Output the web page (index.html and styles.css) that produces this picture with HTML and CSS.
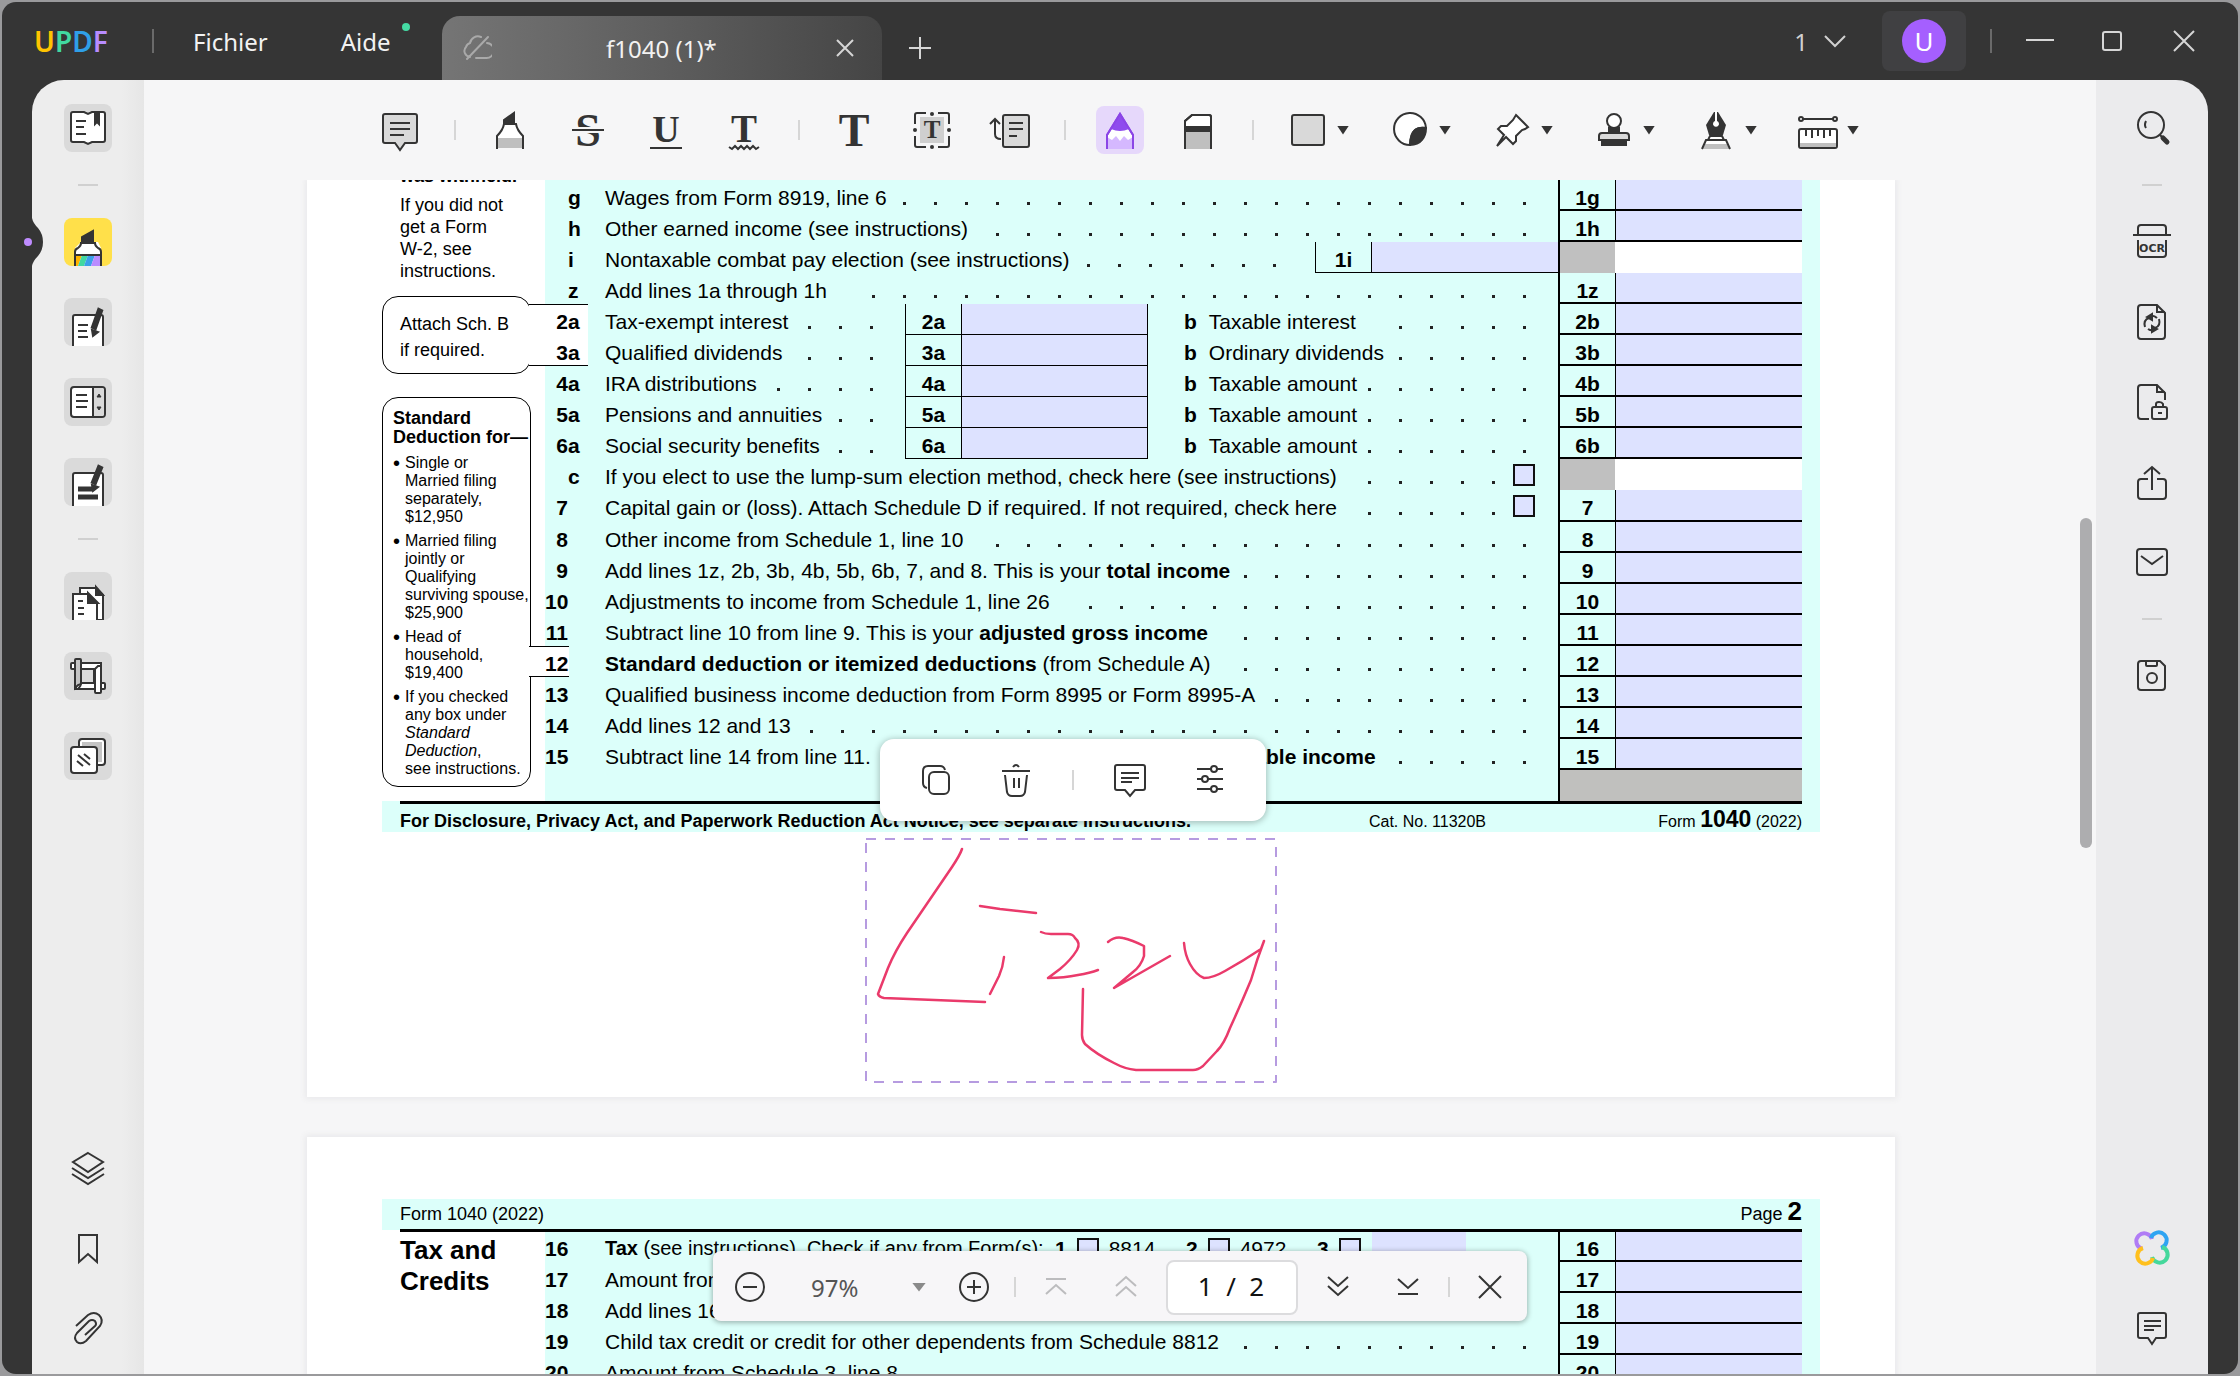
FILE: index.html
```html
<!DOCTYPE html>
<html lang="fr">
<head>
<meta charset="utf-8">
<title>UPDF - f1040 (1)</title>
<meta name="viewport" content="width=device-width, initial-scale=1">
<link rel="stylesheet" href="styles.css">
</head>
<body>
<div class="window">
  <header class="titlebar">
    <div class="logo"><span class="c-yellow">U</span><span class="c-green">P</span><span class="c-blue">D</span><span class="c-purple">F</span></div>
    <span class="bar-sep"></span>
    <nav class="menus">
      <button class="menu">Fichier</button>
      <button class="menu">Aide<span class="dot"></span></button>
    </nav>
    <div class="tab">
      <svg class="tab-cloud" width="30" height="28" viewBox="0 0 30 28" fill="none" stroke="#a9a9a9" stroke-width="2" stroke-linecap="round"><path d="M8 23a6 6 0 0 1-4-10 6 6 0 0 1 4-4 8 8 0 0 1 11-6M25 9a7 7 0 0 1-1 15H14M26 3 5 25"/></svg>
      <span class="tab-title">f1040 (1)*</span>
      <button class="plain" aria-label="Fermer l'onglet"><svg width="18" height="18" viewBox="0 0 18 18" stroke="#d6d6d6" stroke-width="2"><path d="M1 1l16 16M17 1 1 17"/></svg></button>
    </div>
    <button class="plain new-tab" aria-label="Nouvel onglet"><svg width="24" height="24" viewBox="0 0 24 24" stroke="#d6d6d6" stroke-width="2"><path d="M12 1v22M1 12h22"/></svg></button>
    <div class="window-tools">
      <button class="count">1<svg width="22" height="14" viewBox="0 0 22 14" fill="none" stroke="#d0d0d0" stroke-width="2"><path d="M1 2l10 10L21 2"/></svg></button>
      <button class="account" aria-label="Compte"><span class="avatar">U</span></button>
      <span class="bar-sep"></span>
      <button class="plain win" aria-label="Réduire"><svg width="28" height="22" viewBox="0 0 28 22" stroke="#d6d6d6" stroke-width="2"><path d="M0 10h28"/></svg></button>
      <button class="plain win" aria-label="Agrandir"><svg width="22" height="22" viewBox="0 0 22 22" fill="none" stroke="#d6d6d6" stroke-width="2"><rect x="2" y="2" width="18" height="18" rx="2"/></svg></button>
      <button class="plain win" aria-label="Fermer"><svg width="22" height="22" viewBox="0 0 22 22" stroke="#d6d6d6" stroke-width="2"><path d="M1 1l20 20M21 1 1 21"/></svg></button>
    </div>
  </header>

  <div class="shell">
    <nav class="rail rail-left">
      <button class="tile" aria-label="Lecteur"><svg viewBox="0 0 48 48"><path d="M9 8h11l4 2 4-2h11a2 2 0 0 1 2 2v26a2 2 0 0 1-2 2H28l-4 2-4-2H9a2 2 0 0 1-2-2V10a2 2 0 0 1 2-2z" fill="#fff"/><path d="M12 17h10M12 23h8M12 30h10"/><path d="M31 9h4v11l-2-2-2 2z" fill="#343434"/></svg></button>
      <span class="rule"></span>
      <button class="tile active" aria-label="Commenter"><svg viewBox="0 0 48 48"><path d="M17 24h17l3 6v18H11V30z" fill="#fff" stroke="none"/><path d="M11 37h7l-4 11h-3z" fill="#ffb400" stroke="none"/><path d="M18 37h6l-4 11h-6z" fill="#41d8a0" stroke="none"/><path d="M24 37h7l-4 11h-7z" fill="#3aa0e8" stroke="none"/><path d="M31 37h6v11H27z" fill="#b98cff" stroke="none"/><path d="M18 24v-5l11-6v11z" fill="#343434"/><path d="M11 48V34q0-3 3-4 3-2 3-5h14q0 3 3 5 3 1 3 4v14M11 37h26"/></svg></button>
      <button class="tile" aria-label="Modifier"><svg viewBox="0 0 48 48"><path d="M9 48V19a2 2 0 0 1 2-2h26a2 2 0 0 1 2 2v29" fill="#fff"/><path d="M14 27h10M14 33h9M14 39h10"/><path d="M35 12l2 1-6 17-2-1z" fill="#343434" stroke-width="4"/><path d="M28 32l6 2-5 4z" fill="#343434"/></svg></button>
      <button class="tile" aria-label="Formulaire"><svg viewBox="0 0 48 48"><rect x="7" y="9" width="34" height="30" rx="3" fill="#fff"/><path d="M30 10h8q2 0 2 2v24q0 2-2 2h-8z" fill="#d9d9d9" stroke="none"/><path d="M29 9v30M12 17h11M12 23h12M12 29h11"/><path d="M33 19l2-3 2 3zM33 29l2 3 2-3z" fill="#343434" stroke-width="1"/></svg></button>
      <button class="tile" aria-label="Caviarder"><svg viewBox="0 0 48 48"><path d="M9 48V17a2 2 0 0 1 2-2h26a2 2 0 0 1 2 2v31" fill="#fff"/><path d="M14 31h14M14 39h20" stroke-width="5"/><path d="M35 9l2 1-6 15-2-1z" fill="#343434" stroke-width="4"/><path d="M28 27l6 2-5 4z" fill="#343434"/></svg></button>
      <span class="rule"></span>
      <button class="tile" aria-label="Organiser"><svg viewBox="0 0 48 48"><path d="M16 44V16h16l7 7v25H16" fill="#fff"/><path d="M32 15v8h7z" fill="#343434"/><path d="M9 48V22h15l9 9v17" fill="#fff"/><path d="M24 21v10h10z" fill="#343434"/><path d="M14 29h5M14 36h6M14 42h6"/></svg></button>
      <button class="tile" aria-label="Recadrer"><svg viewBox="0 0 48 48"><path d="M8 11h29v6H8q-1 0-1-1v-4q0-1 1-1z" fill="#fff"/><path d="M12 31h28q1 0 1 1v4q0 1-1 1H12z" fill="#fff"/><path d="M12 7h4q1 0 1 1v24l-3 1-3 3V8q0-1 1-1z" fill="#c4c4c4"/><path d="M31 17l3-3h3v26q0 1-1 1h-4q-1 0-1-1z" fill="#fff"/><path d="M11 33v4h3l3-4M30 18v13H17"/></svg></button>
      <button class="tile" aria-label="Filigrane"><svg viewBox="0 0 48 48"><rect x="15" y="7" width="26" height="26" rx="3" fill="#fff"/><path d="M18 10h20v20H18z" fill="#c4c4c4" stroke="none"/><rect x="7" y="15" width="26" height="26" rx="3" fill="#fff"/><path d="M13 29l6 5M14 23l12 10M20 22l6 5"/></svg></button>
      <span class="spacer"></span>
      <button class="tile bare" aria-label="Calques"><svg viewBox="0 0 48 48"><path d="M24 9l15 9-15 10L9 18zM8 24l16 10 16-10M8 30l16 10 16-10"/></svg></button>
      <button class="tile bare" aria-label="Signets"><svg viewBox="0 0 48 48"><path d="M15 11h18v27l-9-8-9 8z"/></svg></button>
      <button class="tile bare" aria-label="Pièces jointes"><svg viewBox="0 0 48 48"><path d="M12 22 24 11q6-4 11 0 5 5 1 11L22 37q-5 4-9 1-4-4 0-9l12-12q3-2 6 0 2 3 0 5L21 31"/></svg></button>
      <svg class="notch" width="12" height="48" viewBox="0 0 12 48"><path d="M0 0q1 5 6 10 5 6 5 14t-5 14q-5 5-6 10z" fill="#353535"/></svg>
      <span class="notch-dot"></span>
    </nav>

    <main class="workspace">
      <div class="toolbar">
        <button class="tool" aria-label="Note"><svg viewBox="0 0 40 40"><path d="M5 4h30a2 2 0 0 1 2 2v25a2 2 0 0 1-2 2H25l-5 7-5-7H5a2 2 0 0 1-2-2V6a2 2 0 0 1 2-2z" fill="#d9d9d9"/><path d="M10 13h20M10 19h20M10 25h14"/></svg></button>
        <span class="sep"></span>
        <button class="tool" aria-label="Surligner"><svg viewBox="0 0 40 40"><path d="M14 14h13l6 12v12H7V26z" fill="#fff" stroke="none"/><path d="M7 28h26v10H7z" fill="#bfbfbf" stroke="none"/><path d="M14 14V10l10-7v11z" fill="#343434"/><path d="M7 39V26q6-6 7-12h12q1 6 7 12v13"/></svg></button>
        <button class="tool" aria-label="Barrer"><svg viewBox="0 0 40 40"><text class="serif" x="20" y="36" font-size="46">S</text><path d="M4 20h32" class="knock"/><path d="M4 20h32"/></svg></button>
        <button class="tool" aria-label="Souligner"><svg viewBox="0 0 40 40"><text class="serif" x="20" y="32" font-size="38">U</text><path d="M4 38h32"/></svg></button>
        <button class="tool" aria-label="Ondulé"><svg viewBox="0 0 40 40"><text class="serif" x="20" y="32" font-size="39">T</text><path d="M5 37l3 2 3-3 3 3 3-3 3 3 3-3 3 3 3-3 3 3 3-2"/></svg></button>
        <span class="sep"></span>
        <button class="tool" aria-label="Texte"><svg viewBox="0 0 40 40"><text class="serif" x="20" y="36" font-size="46">T</text></svg></button>
        <button class="tool" aria-label="Zone de texte"><svg viewBox="0 0 40 40"><path d="M8 7h24v26H8z" fill="#cfcfcf" stroke="none"/><text class="serif" x="20" y="28" font-size="25">T</text><path d="M14 3H5q-2 0-2 2v9M26 3h9q2 0 2 2v9M14 37H5q-2 0-2-2v-9M26 37h9q2 0 2-2v-9"/><g fill="#343434" stroke="none"><circle cx="20" cy="4" r="2"/><circle cx="20" cy="37" r="2"/><circle cx="3" cy="20" r="2"/><circle cx="37" cy="20" r="2"/></g></svg></button>
        <button class="tool" aria-label="Légende"><svg viewBox="0 0 40 40"><rect x="13" y="5" width="26" height="32" rx="2" fill="#d9d9d9"/><path d="M19 13h14M19 19h14M19 26h8"/><path d="M0 14l5-5 5 5M5 9v15q0 5 6 5"/></svg></button>
        <span class="sep"></span>
        <button class="tool active" aria-label="Crayon"><svg viewBox="0 0 40 40"><path d="M7 39V25L20 4l13 21v14" fill="#fff"/><path d="M7 39V27l5 3 4-4 4 5 4-5 4 4 5-3v12z" fill="#d5b8ff" stroke="none"/><path d="M20 3l9 16q-9 4-18 0z" fill="#8f4bee" stroke="none"/><path d="M7 39V25L20 4l13 21v14"/></svg></button>
        <button class="tool" aria-label="Gomme"><svg viewBox="0 0 40 40"><path d="M7 39V11l7-6h17q2 0 2 2v32" fill="#fff"/><path d="M8 22h24v17H8z" fill="#bfbfbf" stroke="none"/><path d="M7 16h26v6H7z" fill="#343434" stroke="none"/><path d="M7 39V11l7-6h17q2 0 2 2v32"/></svg></button>
        <span class="sep"></span>
        <button class="tool drop" aria-label="Formes"><svg viewBox="0 0 40 40"><rect x="4" y="5" width="32" height="30" rx="2" fill="#d9d9d9"/></svg><span class="caret"></span></button>
        <button class="tool drop" aria-label="Autocollants"><svg viewBox="0 0 40 40"><path d="M36 18A16 16 0 1 0 20 35q1-12 5-15 4-3 11-2z" fill="#fff"/><path d="M36 18q-8-1-11 2-5 4-5 15 8 0 12-5 4-5 4-12z" fill="#343434"/></svg><span class="caret"></span></button>
        <button class="tool drop" aria-label="Épingle"><svg viewBox="0 0 40 40"><path d="M24 5l12 12-3 2-3 1-6 6 0 5-3 3-7-7-9 9 7-11-6-6 3-3h6l6-6z" fill="#fff"/></svg><span class="caret"></span></button>
        <button class="tool drop" aria-label="Tampon"><svg viewBox="0 0 40 40"><circle cx="20" cy="11" r="7" fill="#fff"/><path d="M15 18h10v5H15z" fill="#343434"/><path d="M8 23h24q3 0 3 3v4H5v-4q0-3 3-3z" fill="#d9d9d9"/><path d="M8 31h24v4H8z" fill="#343434"/></svg><span class="caret"></span></button>
        <button class="tool drop" aria-label="Signature"><svg viewBox="0 0 40 40"><path d="M18 2h4l8 13-3 10H13l-3-10z" fill="#343434" stroke="none"/><path d="M19 1h2v10a3 3 0 1 1-2 0z" fill="#fff" stroke="none"/><path d="M14 26h12l2 4H12z" fill="#fff"/><path d="M10 30h20l4 9H6z" fill="#fff" stroke="none"/><path d="M9 34h22l2 5H7z" fill="#bfbfbf" stroke="none"/><path d="M6 39l4-9h20l4 9"/></svg><span class="caret"></span></button>
        <button class="tool drop" aria-label="Mesure"><svg viewBox="0 0 40 40"><path d="M4 9h32"/><circle cx="3" cy="9" r="2" fill="#fff"/><circle cx="37" cy="9" r="2" fill="#fff"/><rect x="1" y="19" width="38" height="19" rx="2" fill="#fff"/><path d="M2 33h36v4H2z" fill="#bfbfbf" stroke="none"/><path d="M8 20v6M14 20v8M20 20v6M26 20v8M32 20v6"/></svg><span class="caret"></span></button>
      </div>

      <div class="pages">
        <section class="page page-one">
          <div class="form">
            <aside class="notes">
              <p class="note"><b>was withheld.</b></p>
              <p class="note">If you did not<br>get a Form<br>W-2, see<br>instructions.</p>
              <div class="callout attach">Attach Sch. B<br>if required.</div>
              <div class="callout standard">
                <h3>Standard<br>Deduction for—</h3>
                <ul>
                  <li><span>Single or<br>Married filing<br>separately,<br>$12,950</span></li>
                  <li><span>Married filing<br>jointly or<br>Qualifying<br>surviving spouse,<br>$25,900</span></li>
                  <li><span>Head of<br>household,<br>$19,400</span></li>
                  <li><span>If you checked<br>any box under<br><i>Standard<br>Deduction</i>,<br>see instructions.</span></li>
                </ul>
              </div>
            </aside>
            <div class="lines">
              <div class="line"><b class="num"><span></span>g</b><div class="body"><label for="f1g">Wages from Form 8919, line 6</label><span class="leader" style="--dots:21"></span></div><b class="box">1g</b><input class="amount" id="f1g"></div>
              <div class="line"><b class="num"><span></span>h</b><div class="body"><label for="f1h">Other earned income (see instructions)</label><span class="leader" style="--dots:18"></span></div><b class="box">1h</b><input class="amount" id="f1h"></div>
              <div class="line"><b class="num"><span></span>i</b><div class="body"><label for="f1i">Nontaxable combat pay election (see instructions)</label><span class="leader before-box" style="--dots:7"></span><b class="box mini">1i</b><input class="amount mini" id="f1i"></div><span class="box shaded"></span><span class="amount blank"></span></div>
              <div class="line"><b class="num"><span></span>z</b><div class="body"><label for="f1z">Add lines 1a through 1h</label><span class="leader" style="--dots:22"></span></div><b class="box">1z</b><input class="amount" id="f1z"></div>
              <div class="line"><b class="num tab-open"><span>2</span>a</b><div class="body"><div class="half"><label for="f2a">Tax-exempt interest</label><span class="leader" style="--dots:3"></span></div><b class="box mini">2a</b><input class="amount mini closed" id="f2a"><b class="sub">b</b><label for="f2b">Taxable interest</label><span class="leader" style="--dots:5"></span></div><b class="box">2b</b><input class="amount" id="f2b"></div>
              <div class="line"><b class="num tab-close"><span>3</span>a</b><div class="body"><div class="half"><label for="f3a">Qualified dividends</label><span class="leader" style="--dots:3"></span></div><b class="box mini">3a</b><input class="amount mini closed" id="f3a"><b class="sub">b</b><label for="f3b">Ordinary dividends</label><span class="leader" style="--dots:5"></span></div><b class="box">3b</b><input class="amount" id="f3b"></div>
              <div class="line"><b class="num"><span>4</span>a</b><div class="body"><div class="half"><label for="f4a">IRA distributions</label><span class="leader" style="--dots:4"></span></div><b class="box mini">4a</b><input class="amount mini closed" id="f4a"><b class="sub">b</b><label for="f4b">Taxable amount</label><span class="leader" style="--dots:6"></span></div><b class="box">4b</b><input class="amount" id="f4b"></div>
              <div class="line"><b class="num"><span>5</span>a</b><div class="body"><div class="half"><label for="f5a">Pensions and annuities</label><span class="leader" style="--dots:2"></span></div><b class="box mini">5a</b><input class="amount mini closed" id="f5a"><b class="sub">b</b><label for="f5b">Taxable amount</label><span class="leader" style="--dots:6"></span></div><b class="box">5b</b><input class="amount" id="f5b"></div>
              <div class="line"><b class="num"><span>6</span>a</b><div class="body"><div class="half"><label for="f6a">Social security benefits</label><span class="leader" style="--dots:2"></span></div><b class="box mini">6a</b><input class="amount mini closed" id="f6a"><b class="sub">b</b><label for="f6b">Taxable amount</label><span class="leader" style="--dots:6"></span></div><b class="box">6b</b><input class="amount" id="f6b"></div>
              <div class="line"><b class="num"><span></span>c</b><div class="body"><label for="f6c">If you elect to use the lump-sum election method, check here (see instructions)</label><span class="leader before-check" style="--dots:5"></span><input type="checkbox" class="check" id="f6c"></div><span class="box shaded"></span><span class="amount blank"></span></div>
              <div class="line"><b class="num"><span>7</span></b><div class="body"><label for="f7c">Capital gain or (loss). Attach Schedule D if required. If not required, check here</label><span class="leader before-check" style="--dots:5"></span><input type="checkbox" class="check" id="f7c"></div><b class="box">7</b><input class="amount" aria-label="7"></div>
              <div class="line"><b class="num"><span>8</span></b><div class="body"><label for="f8">Other income from Schedule 1, line 10</label><span class="leader" style="--dots:18"></span></div><b class="box">8</b><input class="amount" id="f8"></div>
              <div class="line"><b class="num"><span>9</span></b><div class="body"><label for="f9">Add lines 1z, 2b, 3b, 4b, 5b, 6b, 7, and 8. This is your <b>total income</b></label><span class="leader" style="--dots:10"></span></div><b class="box">9</b><input class="amount" id="f9"></div>
              <div class="line"><b class="num"><span>10</span></b><div class="body"><label for="f10">Adjustments to income from Schedule 1, line 26</label><span class="leader" style="--dots:15"></span></div><b class="box">10</b><input class="amount" id="f10"></div>
              <div class="line"><b class="num"><span>11</span></b><div class="body"><label for="f11">Subtract line 10 from line 9. This is your <b>adjusted gross income</b></label><span class="leader" style="--dots:10"></span></div><b class="box">11</b><input class="amount" id="f11"></div>
              <div class="line"><b class="num tab-single"><span>12</span></b><div class="body"><label for="f12"><b>Standard deduction or itemized deductions</b> (from Schedule A)</label><span class="leader" style="--dots:10"></span></div><b class="box">12</b><input class="amount" id="f12"></div>
              <div class="line"><b class="num"><span>13</span></b><div class="body"><label for="f13">Qualified business income deduction from Form 8995 or Form 8995-A</label><span class="leader" style="--dots:9"></span></div><b class="box">13</b><input class="amount" id="f13"></div>
              <div class="line"><b class="num"><span>14</span></b><div class="body"><label for="f14">Add lines 12 and 13</label><span class="leader" style="--dots:24"></span></div><b class="box">14</b><input class="amount" id="f14"></div>
              <div class="line"><b class="num"><span>15</span></b><div class="body"><label for="f15">Subtract line 14 from line 11. &nbsp;If zero or less, enter -0-. This is your <b>taxable income</b></label><span class="leader" style="--dots:5"></span></div><b class="box">15</b><input class="amount" id="f15"></div>
              <div class="line"><span class="shaded-end"></span></div>
            </div>
          </div>
          <footer class="form-foot">
            <div class="foot-row"><b class="notice">For Disclosure, Privacy Act, and Paperwork Reduction Act Notice, see separate instructions.</b><span class="cat">Cat. No. 11320B</span><span class="form-id">Form <b>1040</b> (2022)</span></div>
          </footer>

          <div class="ink">
            <svg width="413" height="246" viewBox="0 0 413 246" fill="none" stroke="#ea3a6b" stroke-width="2.5" stroke-linecap="round" stroke-linejoin="round">
              <rect x="1" y="1" width="410" height="243" stroke="#b69be0" stroke-width="2" stroke-dasharray="10 9" stroke-linecap="butt"/>
              <path d="M97 11q-2 6-10 18L42 95q-12 18-19 35l-10 26q1 3 6 4l101 4M139 119q-1 10-5 19l-9 18M115 68l20 3 36 4"/>
              <path d="M176 94q4 2 10 2h17q5 0 7 4 6 5 2 12-6 10-17 19l-12 9q16 0 30-3 12-2 20-5M243 104q7-6 15-4 9 2 21 8v10q-3 10-11 16l-19 16 56-32"/>
              <path d="M319 105q1 12 6 21 6 11 14 14 9 0 21-7 18-10 36-22l3-8q-7 18-13 39-10 24-21 48-6 16-13 23l-14 15q-5 4-10 4h-57q-11-1-22-7-18-9-29-19-3-4-3-9l1-46"/>
            </svg>
            <div class="float-bar">
              <button class="tool" aria-label="Copier"><svg viewBox="0 0 40 40"><path d="M11 28q-4-1-4-5V11q0-5 5-5h12q4 0 5 4"/><rect x="13" y="12" width="20" height="22" rx="5"/></svg></button>
              <button class="tool" aria-label="Supprimer"><svg viewBox="0 0 40 40"><path d="M6 11h28M17 7q3-4 6 0M9 15l2 17q1 4 5 4h8q4 0 5-4l2-17M18 18v10M23 18v10"/></svg></button>
              <span class="sep"></span>
              <button class="tool" aria-label="Note"><svg viewBox="0 0 40 40"><path d="M7 5h26q2 0 2 2v21q0 2-2 2h-8l-5 6-5-6H7q-2 0-2-2V7q0-2 2-2zM11 13h18M11 18h18M11 22h11"/></svg></button>
              <button class="tool" aria-label="Propriétés"><svg viewBox="0 0 40 40"><path d="M7 9h14M27 9h6M7 19h5M18 19h15M7 29h14M27 29h6"/><circle cx="24" cy="9" r="3"/><circle cx="15" cy="19" r="3"/><circle cx="24" cy="29" r="3"/></svg></button>
            </div>
          </div>
        </section>

        <section class="page page-two">
          <div class="form-head"><div class="head-row"><span>Form 1040 (2022)</span><span>Page <b>2</b></span></div></div>
          <div class="form">
            <h2 class="part">Tax and<br>Credits</h2>
            <div class="lines fixed">
              <div class="line"><b class="num"><span>16</span></b><div class="body"><div class="tax-text"><b>Tax</b> (see instructions). Check if any from Form(s):</div><label class="opt"><b>1</b><input type="checkbox" class="check">8814</label><label class="opt"><b>2</b><input type="checkbox" class="check">4972</label><label class="opt"><b>3</b><input type="checkbox" class="check"></label><input class="amount other" aria-label="Form"></div><b class="box">16</b><input class="amount" aria-label="16"></div>
              <div class="line"><b class="num"><span>17</span></b><div class="body"><label for="f17">Amount from Schedule 2, line 3</label></div><b class="box">17</b><input class="amount" id="f17"></div>
              <div class="line"><b class="num"><span>18</span></b><div class="body"><label for="f18">Add lines 16 and 17</label></div><b class="box">18</b><input class="amount" id="f18"></div>
              <div class="line"><b class="num"><span>19</span></b><div class="body"><label for="f19">Child tax credit or credit for other dependents from Schedule 8812</label><span class="leader" style="--dots:10"></span></div><b class="box">19</b><input class="amount" id="f19"></div>
              <div class="line"><b class="num"><span>20</span></b><div class="body"><label for="f20">Amount from Schedule 3, line 8</label><span class="leader" style="--dots:20"></span></div><b class="box">20</b><input class="amount" id="f20"></div>
            </div>
          </div>
        </section>
      </div>

      <span class="scroll-thumb"></span>

      <div class="pager">
        <button class="cell" aria-label="Zoom arrière"><svg width="32" height="32" viewBox="0 0 32 32"><circle cx="16" cy="16" r="14"/><path d="M9 16h14"/></svg></button>
        <div class="zoom"><select aria-label="Zoom"><option>97%</option></select><span class="caret"></span></div>
        <button class="cell" aria-label="Zoom avant"><svg width="32" height="32" viewBox="0 0 32 32"><circle cx="16" cy="16" r="14"/><path d="M9 16h14M16 9v14"/></svg></button>
        <span class="sep"></span>
        <button class="cell off" aria-label="Première page"><svg width="32" height="32" viewBox="0 0 32 32"><path d="M6 8h20M6 23l10-9 10 9"/></svg></button>
        <button class="cell off" aria-label="Page précédente"><svg width="32" height="32" viewBox="0 0 32 32"><path d="M6 15l10-9 10 9M6 25l10-9 10 9"/></svg></button>
        <input class="page-no" aria-label="Page" value="1  /  2">
        <button class="cell" aria-label="Page suivante"><svg width="32" height="32" viewBox="0 0 32 32"><path d="M6 6l10 9 10-9M6 15l10 9 10-9"/></svg></button>
        <button class="cell" aria-label="Dernière page"><svg width="32" height="32" viewBox="0 0 32 32"><path d="M6 23h20M6 8l10 9 10-9"/></svg></button>
        <span class="sep"></span>
        <button class="cell" aria-label="Fermer"><svg width="32" height="32" viewBox="0 0 32 32"><path d="M5 5l22 22M27 5 5 27"/></svg></button>
      </div>
    </main>

    <nav class="rail rail-right">
      <button class="tile bare" aria-label="Rechercher"><svg viewBox="0 0 48 48"><circle cx="23" cy="21" r="13"/><path d="M18 17q-2 4 0 7M32 31l3 3"/><path d="M35 34l4 4" stroke-width="5" stroke-linecap="round"/></svg></button>
      <span class="rule"></span>
      <button class="tile bare" aria-label="OCR"><svg viewBox="0 0 48 48"><path d="M10 16v-6q0-3 3-3h22q3 0 3 3v6M5 17h38M10 22v14q0 3 3 3h22q3 0 3-3V22"/><text x="24" y="34" class="ocr">OCR</text></svg></button>
      <button class="tile bare" aria-label="Convertir"><svg viewBox="0 0 48 48"><path d="M13 7h16l8 8v23q0 3-3 3H13q-3 0-3-3V10q0-3 3-3zM29 7v7h8"/><path d="M17 29q-2-7 4-9M31 21q2 7-4 9M20 31q3 2 6 1M22 18q4-1 7 2"/><path d="M19 19l5-3v6zM29 31l-5-3v6z" fill="#343434"/></svg></button>
      <button class="tile bare" aria-label="Protéger"><svg viewBox="0 0 48 48"><path d="M21 41h-8q-3 0-3-3V10q0-3 3-3h16l8 8v7M29 7v7h8"/><rect x="24" y="29" width="15" height="12" rx="2"/><path d="M28 28v-2q0-2 3-2t4 2v2M30 35h4"/></svg></button>
      <button class="tile bare" aria-label="Partager"><svg viewBox="0 0 48 48"><path d="M20 21h-7q-3 0-3 3v14q0 3 3 3h22q3 0 3-3V24q0-3-3-3h-6M24 32V10M16 16l8-7 8 7"/></svg></button>
      <button class="tile bare" aria-label="E-mail"><svg viewBox="0 0 48 48"><rect x="9" y="11" width="30" height="26" rx="3"/><path d="M13 18l11 8 11-8"/></svg></button>
      <span class="rule"></span>
      <button class="tile bare" aria-label="Enregistrer"><svg viewBox="0 0 48 48"><path d="M13 9h19l5 5v21q0 3-3 3H13q-3 0-3-3V12q0-3 3-3zM18 9v4q0 1 1 1h9q1 0 1-1V9"/><circle cx="24" cy="26" r="5"/></svg></button>
      <span class="spacer"></span>
      <button class="tile bare clover" aria-label="UPDF AI"><svg viewBox="0 0 48 48"><path d="M24 15A8 8 0 1 0 14 25" stroke="#b07cf5"/><path d="M33 24A8 8 0 1 0 23 14" stroke="#2fa4f2"/><path d="M24 33A8 8 0 1 0 34 23" stroke="#45d89c"/><path d="M15 24A8 8 0 1 0 25 34" stroke="#ffc01e"/></svg></button>
      <button class="tile bare" aria-label="Commentaires"><svg viewBox="0 0 48 48"><path d="M12 9h24q2 0 2 2v21q0 2-2 2h-8l-4 6-4-6h-8q-2 0-2-2V11q0-2 2-2zM16 17h17M16 22h17M16 26h10"/></svg></button>
    </nav>
  </div>
</div>
</body>
</html>
```
FILE: styles.css
```css
:root {
  --ink: #343434;
  --dark: #353535;
  --teal: #dcfffa;
  --field: #dde2ff;
  --ui: "Noto Sans", "Open Sans", sans-serif;
}

* { box-sizing: border-box; }

body {
  margin: 0;
  height: 100vh;
  padding: 2px;
  overflow: hidden;
  background: #9a9a9c;
  font-family: "Liberation Sans", Arial, sans-serif;
  color: #000;
}

button {
  margin: 0;
  padding: 0;
  border: 0;
  background: none;
  font: inherit;
  color: inherit;
}

svg { display: block; flex: none; }
p, h2, h3, ul { margin: 0; padding: 0; }

.window {
  display: flex;
  flex-direction: column;
  height: 100%;
  overflow: hidden;
  border-radius: 14px;
  background: var(--dark);
}

/* title bar */
.titlebar {
  display: flex;
  align-items: center;
  flex: none;
  height: 78px;
  padding-left: 32px;
  font-family: var(--ui);
  font-size: 24px;
  color: #f2f2f2;
}

.logo { width: 104px; font-size: 28px; font-weight: 600; }
.c-yellow { color: #ffc400; }
.c-green { color: #41d8a0; }
.c-blue { color: #2f9fe8; }
.c-purple { color: #b88cff; }

.bar-sep { width: 2px; height: 24px; margin-left: 14px; background: #6a6a6a; }

.menus { display: flex; gap: 73px; margin-left: 39px; }
.menu { position: relative; }
.dot {
  position: absolute;
  top: -2px;
  right: -20px;
  width: 8px;
  height: 8px;
  border-radius: 50%;
  background: #45dba4;
}

.tab {
  display: flex;
  align-items: center;
  align-self: flex-end;
  width: 440px;
  height: 64px;
  margin-left: 52px;
  padding: 0 28px 0 20px;
  border-radius: 18px 18px 0 0;
  background: linear-gradient(90deg, #757575, #5e5e5e 50%, #454545);
}
.tab-title { flex: 1; padding-right: 6px; text-align: center; }
.new-tab { margin-left: 26px; padding-top: 14px; }
.plain { display: grid; place-items: center; }

.window-tools {
  display: flex;
  align-items: center;
  margin-left: auto;
  padding-right: 18px;
}
.window-tools .bar-sep { margin: 0 12px 0 24px; }
.count { display: flex; align-items: center; gap: 16px; color: #d0d0d0; }
.account {
  display: grid;
  place-items: center;
  width: 84px;
  height: 60px;
  margin-left: 36px;
  border-radius: 8px;
  background: #404042;
}
.avatar {
  width: 44px;
  height: 44px;
  border-radius: 50%;
  background: #a55fff;
  color: #fff;
  font-size: 26px;
  line-height: 44px;
}
.win { width: 72px; }

/* shell */
.shell { display: flex; flex: 1; min-height: 0; padding: 0 30px; }

.rail {
  position: relative;
  display: flex;
  flex-direction: column;
  align-items: center;
  gap: 32px;
  flex: none;
  width: 112px;
  padding: 24px 0 22px;
}
.rail-left {
  border-top-left-radius: 32px;
  background: linear-gradient(90deg, #ededed 80%, #e6e6e6);
}
.rail-right { border-top-right-radius: 32px; background: #ebebed; }

.tile {
  flex: none;
  width: 48px;
  height: 48px;
  overflow: hidden;
  border-radius: 8px;
  background: #dadada;
}
.tile svg { width: 48px; height: 48px; fill: none; stroke: var(--ink); stroke-width: 2; }
.tile.clover svg { stroke-width: 4; }
.tile.active { background: #ffe04a; }
.tile.bare { background: none; }
.rule { flex: none; width: 20px; height: 2px; background: #d0d0d0; }
.spacer { flex: 1; }
.ocr {
  fill: var(--ink);
  stroke: none;
  font: 700 11px "DejaVu Sans", sans-serif;
  text-anchor: middle;
}
.notch { position: absolute; left: 0; top: 138px; }
.notch-dot {
  position: absolute;
  left: -8px;
  top: 158px;
  width: 8px;
  height: 8px;
  border-radius: 50%;
  background: #bf8cff;
}

.workspace {
  position: relative;
  display: flex;
  flex-direction: column;
  flex: 1;
  min-width: 0;
  background: #f6f6f7;
}

/* annotation toolbar */
.toolbar {
  display: flex;
  align-items: center;
  justify-content: center;
  gap: 30px;
  flex: none;
  height: 100px;
  padding-left: 2px;
}
.tool {
  display: flex;
  align-items: center;
  flex: none;
  width: 48px;
  height: 48px;
  padding-left: 4px;
  border-radius: 8px;
}
.tool svg {
  width: 40px;
  height: 40px;
  fill: none;
  stroke: var(--ink);
  stroke-width: 2;
  overflow: visible;
}
.tool.active { background: #e6d8fb; }
.tool.active svg { stroke: #8b45e6; }
.tool.drop { width: 72px; gap: 9px; }
.tool.drop .caret { width: 12px; }
.knock { stroke: #f6f6f7; stroke-width: 6; }
.sep { flex: none; width: 2px; height: 20px; background: #d6d6d6; }
.caret {
  width: 14px;
  height: 9px;
  background: var(--ink);
  clip-path: polygon(0 0, 100% 0, 50% 100%);
}
.serif {
  fill: var(--ink);
  stroke: none;
  font-family: "Liberation Serif", serif;
  font-weight: 700;
  text-anchor: middle;
}

/* document */
.pages {
  display: flex;
  flex-direction: column;
  align-items: center;
  gap: 40px;
  flex: 1;
  min-height: 0;
  overflow: hidden;
  padding-right: 38px;
}
.page {
  position: relative;
  flex: none;
  width: 100%;
  max-width: 1588px;
  padding: 0 75px;
  background: #fff;
  box-shadow: 0 0 6px 2px #e9e9eb;
}
.page-one { height: 917px; }
.page-two { padding-top: 62px; }

.form { display: grid; grid-template-columns: 163px 1fr; }
.lines {
  display: grid;
  grid-template-rows: 31px repeat(19, minmax(0, 1fr));
  height: 621px;
  background: var(--teal);
  font-size: 21px;
  line-height: 35px;
}
.lines.fixed { grid-template-rows: repeat(5, 31px); height: auto; padding-top: 1px; }

.line {
  display: grid;
  grid-template-columns: 60px 1fr 57px 187px;
  grid-template-rows: minmax(0, 1fr);
  min-height: 0;
  padding-right: 18px;
}
.num { display: flex; width: 42px; height: 100%; }
.num span { flex: none; width: 23px; text-align: right; }
.tab-open, .tab-close, .tab-single {
  width: 59px;
  margin-left: -16px;
  padding-left: 16px;
  background: #fff;
}
.tab-open { border-top: 1px solid #000; line-height: 33px; }
.tab-close { border-bottom: 1px solid #000; }
.tab-single { width: 40px; border: solid #000; border-width: 1px 0; line-height: 33px; }

.body { display: flex; min-width: 0; height: 100%; white-space: nowrap; }
.half { display: flex; flex: none; width: 300px; }
.sub { margin: 0 12px 0 36px; }
.leader {
  flex: none;
  width: calc(var(--dots) * 31px - 28px);
  height: 3px;
  margin: 22px 32px 0 auto;
  background: repeating-linear-gradient(to left, #222 0 3px, transparent 3px 31px);
}
.leader.before-box { margin-right: 39px; }
.leader.before-check { margin-right: 18px; }

.box {
  display: block;
  min-height: 0;
  height: 100%;
  border: solid #000;
  border-width: 0 0 2px 2px;
  text-align: center;
}
.box.mini { flex: none; width: 56px; border-width: 0 0 1px 1px; }
.amount {
  display: block;
  width: 100%;
  min-width: 0;
  height: 100%;
  margin: 0;
  padding: 0 6px;
  border: solid #000;
  border-width: 0 0 2px 1px;
  border-radius: 0;
  background: var(--field);
  font: 20px "Liberation Sans", Arial, sans-serif;
}
.amount.mini { flex: none; width: 187px; border-width: 0 0 1px 1px; }
.amount.closed { border-right-width: 1px; }
.amount.blank { border-color: transparent; background: #fff; }
.box.shaded { border-bottom: 0; background: #c0c0c0; }
.shaded-end { grid-column: 3 / 5; border-left: 2px solid #000; background: #c0c0be; }

.check {
  appearance: none;
  flex: none;
  width: 22px;
  height: 22px;
  margin: 5px 23px 0 0;
  border: 2px solid #111;
  border-radius: 0;
  background: var(--field);
}

.notes { margin-top: -15px; }
.note { margin-bottom: 7px; padding-left: 18px; font-size: 18px; line-height: 22px; }
.callout { width: 149px; border: 1px solid #000; border-radius: 16px; background: #fff; }
.attach { height: 78px; margin-top: 14px; padding: 14px 17px; font-size: 18px; line-height: 26px; }
.standard {
  height: 390px;
  margin-top: 23px;
  padding: 11px 0 0 10px;
  font-size: 16px;
  line-height: 18px;
  white-space: nowrap;
}
.standard h3 { margin-bottom: 7px; font-size: 18px; line-height: 19px; }
.standard ul { display: grid; gap: 6px; list-style: none; }
.standard li { display: grid; grid-template-columns: 12px 1fr; }
.standard li::before { content: "•"; font-size: 20px; }

.form-foot { height: 31px; padding: 0 18px; background: var(--teal); }
.foot-row {
  display: flex;
  align-items: baseline;
  border-top: 3px solid #000;
  font-size: 16px;
  line-height: 30px;
  white-space: nowrap;
}
.notice { font-size: 18px; }
.cat { margin: 0 auto 0 178px; }
.form-id b { font-size: 23px; }

.form-head { position: relative; height: 31px; padding: 0 18px; background: var(--teal); }
.head-row {
  display: flex;
  align-items: baseline;
  justify-content: space-between;
  height: 33px;
  border-bottom: 3px solid #000;
  font-size: 18px;
  line-height: 24px;
}
.head-row b { font-size: 26px; }
.part { padding: 5px 0 0 18px; font-size: 26px; line-height: 31px; }
.tax-text { flex: none; width: 450px; font-size: 20px; }
.opt { display: flex; flex: none; width: 131px; }
.opt .check { margin: 7px 10px 0; }
.opt + .opt + .opt { width: 55px; }
.amount.other { flex: none; width: 94px; border: 0; }

/* ink annotation */
.ink { position: absolute; left: 558px; top: 658px; }
.float-bar {
  position: absolute;
  left: 15px;
  top: -99px;
  display: flex;
  align-items: center;
  gap: 32px;
  height: 82px;
  padding: 0 32px;
  border-radius: 14px;
  background: #fff;
  box-shadow: 0 1px 6px 1px rgba(0, 0, 0, .25);
}

.scroll-thumb {
  position: absolute;
  right: 4px;
  top: 438px;
  width: 12px;
  height: 330px;
  border-radius: 6px;
  background: #adadaf;
}

/* page navigation */
.pager {
  position: absolute;
  left: 50%;
  bottom: 53px;
  display: flex;
  align-items: center;
  gap: 4px;
  height: 70px;
  padding: 2px 4px 0;
  transform: translateX(-50%);
  border-radius: 8px;
  background: #f7f6f8;
  box-shadow: 0 1px 5px 1px rgba(0, 0, 0, .28);
  font-family: var(--ui);
}
.pager .sep { margin: 0 3px; }
.cell { display: grid; place-items: center; width: 66px; height: 66px; }
.cell svg { fill: none; stroke: var(--ink); stroke-width: 2; }
.cell.off svg { stroke: #bcbcbe; }
.zoom { display: flex; align-items: center; width: 150px; padding-left: 24px; }
.zoom select {
  appearance: none;
  width: 101px;
  padding: 0;
  border: 0;
  background: none;
  font: 24px var(--ui);
  color: #555;
}
.zoom .caret { background: #8a8a8a; }
.page-no {
  width: 132px;
  height: 55px;
  margin: 0 3px;
  padding: 0 2px 3px 0;
  border: 2px solid #dcdcde;
  border-radius: 8px;
  background: #fff;
  font: 26px var(--ui);
  text-align: center;
  color: #111;
}
```
